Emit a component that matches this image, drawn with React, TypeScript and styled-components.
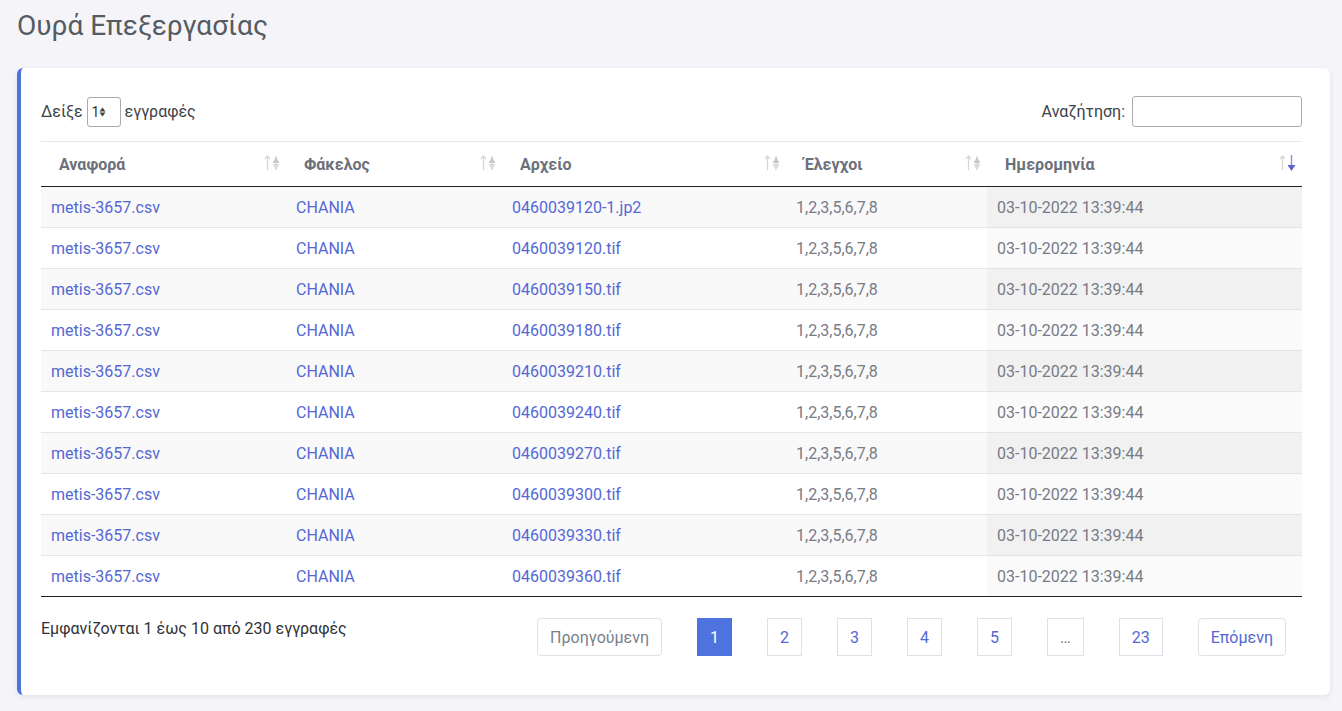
import React from "react";
import styled, { createGlobalStyle } from "styled-components";

const Global = createGlobalStyle`
  html, body { margin: 0; padding: 0; }
  body {
    background: #f4f4f9;
    font-family: Roboto, "Noto Sans", "Liberation Sans", sans-serif;
    color: #495057;
    font-size: 16px;
  }
`;

const Page = styled.div`
  padding: 6px 12px 16px 17px;
  width: 1313px;
`;

const Title = styled.h4`
  margin: 0 0 20px 0;
  font-size: 28px;
  font-weight: 400;
  color: #555b62;
  line-height: 40px;
  height: 42px;
`;

const Card = styled.div`
  background: #fff;
  border-left: 4px solid #4e73df;
  border-radius: 6px;
  box-shadow: 0 2px 6px rgba(30, 40, 80, 0.08);
  padding: 28px 28px 39px 20px;
`;

const Controls = styled.div`
  display: flex;
  justify-content: space-between;
  align-items: center;
  height: 31px;
  margin-bottom: 14px;
  color: #3d4248;
`;

const Label = styled.label`
  display: flex;
  align-items: center;
  gap: 4px;
  font-size: 16px;
`;

const FakeSelect = styled.div`
  width: 34px;
  height: 30px;
  box-sizing: border-box;
  border: 1px solid #aaa;
  border-radius: 3px;
  display: flex;
  align-items: center;
  padding-left: 4px;
  font-size: 14px;
  color: #333;
`;

const SearchInput = styled.input`
  width: 170px;
  height: 31px;
  box-sizing: border-box;
  border: 1px solid #aaa;
  border-radius: 3px;
  margin-left: 3px;
  outline: none;
`;

const Table = styled.table`
  width: 1261px;
  table-layout: fixed;
  border-collapse: collapse;
  border-top: 1px solid #e6e6ee;
  border-bottom: 1px solid #222;
`;

const Th = styled.th`
  height: 44px;
  padding: 0 10px 0 18px;
  text-align: left;
  font-weight: 700;
  font-size: 16px;
  color: #6c7079;
  border-bottom: 1px solid #222;
  position: relative;
`;

const SortIcons = styled.span`
  position: absolute;
  right: 6px;
  top: 12px;
  display: flex;
  gap: 1px;
`;

const Tr = styled.tr<{ $odd: boolean; $first?: boolean }>`
  background: ${(p) => (p.$odd ? "#f9f9f9" : "#fff")};
  border-top: ${(p) => (p.$first ? "none" : "1px solid #e4e4e8")};
`;

const Td = styled.td<{ $sorted?: boolean; $odd?: boolean; $muted?: boolean }>`
  height: 40px;
  padding: 0 10px;
  font-size: 16px;
  color: ${(p) => (p.$muted ? "#777b86" : "#5468d4")};
  background: ${(p) => (p.$sorted ? (p.$odd ? "#f1f1f1" : "#fafafa") : "transparent")};
  white-space: nowrap;
`;

const Footer = styled.div`
  display: flex;
  justify-content: space-between;
  align-items: flex-start;
  margin-top: 21px;
  padding-right: 16px;
`;

const Info = styled.div`
  font-size: 16px;
  color: #2f3338;
  padding-top: 1px;
`;

const Pager = styled.div`
  display: flex;
  gap: 35px;
`;

const PageBtn = styled.div<{ $active?: boolean; $wide?: boolean; $disabled?: boolean }>`
  height: 38px;
  min-width: 35px;
  box-sizing: border-box;
  padding: 0 12px;
  display: flex;
  align-items: center;
  justify-content: center;
  border: 1px solid ${(p) => (p.$active ? "#4e73df" : "#dfe0ea")};
  border-radius: ${(p) => (p.$wide ? "4px" : "0")};
  background: ${(p) => (p.$active ? "#4e73df" : "#fff")};
  color: ${(p) => (p.$active ? "#fff" : p.$disabled ? "#7a7f8a" : "#5468d4")};
  font-size: 16px;
`;

const UpArrow = () => (
  <svg width="7" height="18" viewBox="0 0 7 18">
    <path d="M3.5 2 L3.5 16" stroke="#d6d6d6" strokeWidth="1.2" />
    <path d="M1 5 L3.5 2 L6 5" stroke="#d6d6d6" strokeWidth="1.2" fill="none" />
  </svg>
);

const BothArrow = () => (
  <svg width="8" height="18" viewBox="0 0 8 18">
    <path d="M4 2 L4 16" stroke="#c8c8c8" strokeWidth="1" />
    <path d="M0.5 9 L4 3 L7.5 9 Z" fill="#c8c8c8" />
    <path d="M0.5 10 L4 16 L7.5 10 Z" fill="#dadada" />
  </svg>
);

const DownActive = () => (
  <svg width="9" height="18" viewBox="0 0 9 18">
    <path d="M4.5 1 L4.5 13" stroke="#8a8fdc" strokeWidth="1.4" />
    <path d="M0.5 11 L4.5 17 L8.5 11 Z" fill="#5a62d6" />
  </svg>
);

const SelectArrows = () => (
  <svg width="7" height="10" viewBox="0 0 7 10">
    <path d="M0.5 4.5 L3.5 0.5 L6.5 4.5 Z" fill="#444" />
    <path d="M0.5 5.5 L3.5 9.5 L6.5 5.5 Z" fill="#444" />
  </svg>
);

const files = [
  "0460039120-1.jp2",
  "0460039120.tif",
  "0460039150.tif",
  "0460039180.tif",
  "0460039210.tif",
  "0460039240.tif",
  "0460039270.tif",
  "0460039300.tif",
  "0460039330.tif",
  "0460039360.tif",
];

const headers = ["Αναφορά", "Φάκελος", "Αρχείο", "Έλεγχοι", "Ημερομηνία"];
const widths = [245, 216, 284, 201, 315];

export default function App() {
  return (
    <>
      <Global />
      <Page>
        <Title>Ουρά Επεξεργασίας</Title>
        <Card>
          <Controls>
            <Label>
              Δείξε
              <FakeSelect>
                1<SelectArrows />
              </FakeSelect>
              εγγραφές
            </Label>
            <Label>
              Αναζήτηση:
              <SearchInput type="text" />
            </Label>
          </Controls>
          <Table>
            <colgroup>
              {widths.map((w, i) => (
                <col key={i} style={{ width: w }} />
              ))}
            </colgroup>
            <thead>
              <tr>
                {headers.map((h, i) => (
                  <Th key={h}>
                    {h}
                    <SortIcons>
                      <UpArrow />
                      {i === 4 ? <DownActive /> : <BothArrow />}
                    </SortIcons>
                  </Th>
                ))}
              </tr>
            </thead>
            <tbody>
              {files.map((f, i) => {
                const odd = i % 2 === 0;
                return (
                  <Tr key={f} $odd={odd} $first={i === 0}>
                    <Td>metis-3657.csv</Td>
                    <Td>CHANIA</Td>
                    <Td>{f}</Td>
                    <Td $muted>1,2,3,5,6,7,8</Td>
                    <Td $muted $sorted $odd={odd}>
                      03-10-2022 13:39:44
                    </Td>
                  </Tr>
                );
              })}
            </tbody>
          </Table>
          <Footer>
            <Info>Εμφανίζονται 1 έως 10 από 230 εγγραφές</Info>
            <Pager>
              <PageBtn $wide $disabled>Προηγούμενη</PageBtn>
              <PageBtn $active>1</PageBtn>
              <PageBtn>2</PageBtn>
              <PageBtn>3</PageBtn>
              <PageBtn>4</PageBtn>
              <PageBtn>5</PageBtn>
              <PageBtn $disabled>…</PageBtn>
              <PageBtn>23</PageBtn>
              <PageBtn $wide>Επόμενη</PageBtn>
            </Pager>
          </Footer>
        </Card>
      </Page>
    </>
  );
}
